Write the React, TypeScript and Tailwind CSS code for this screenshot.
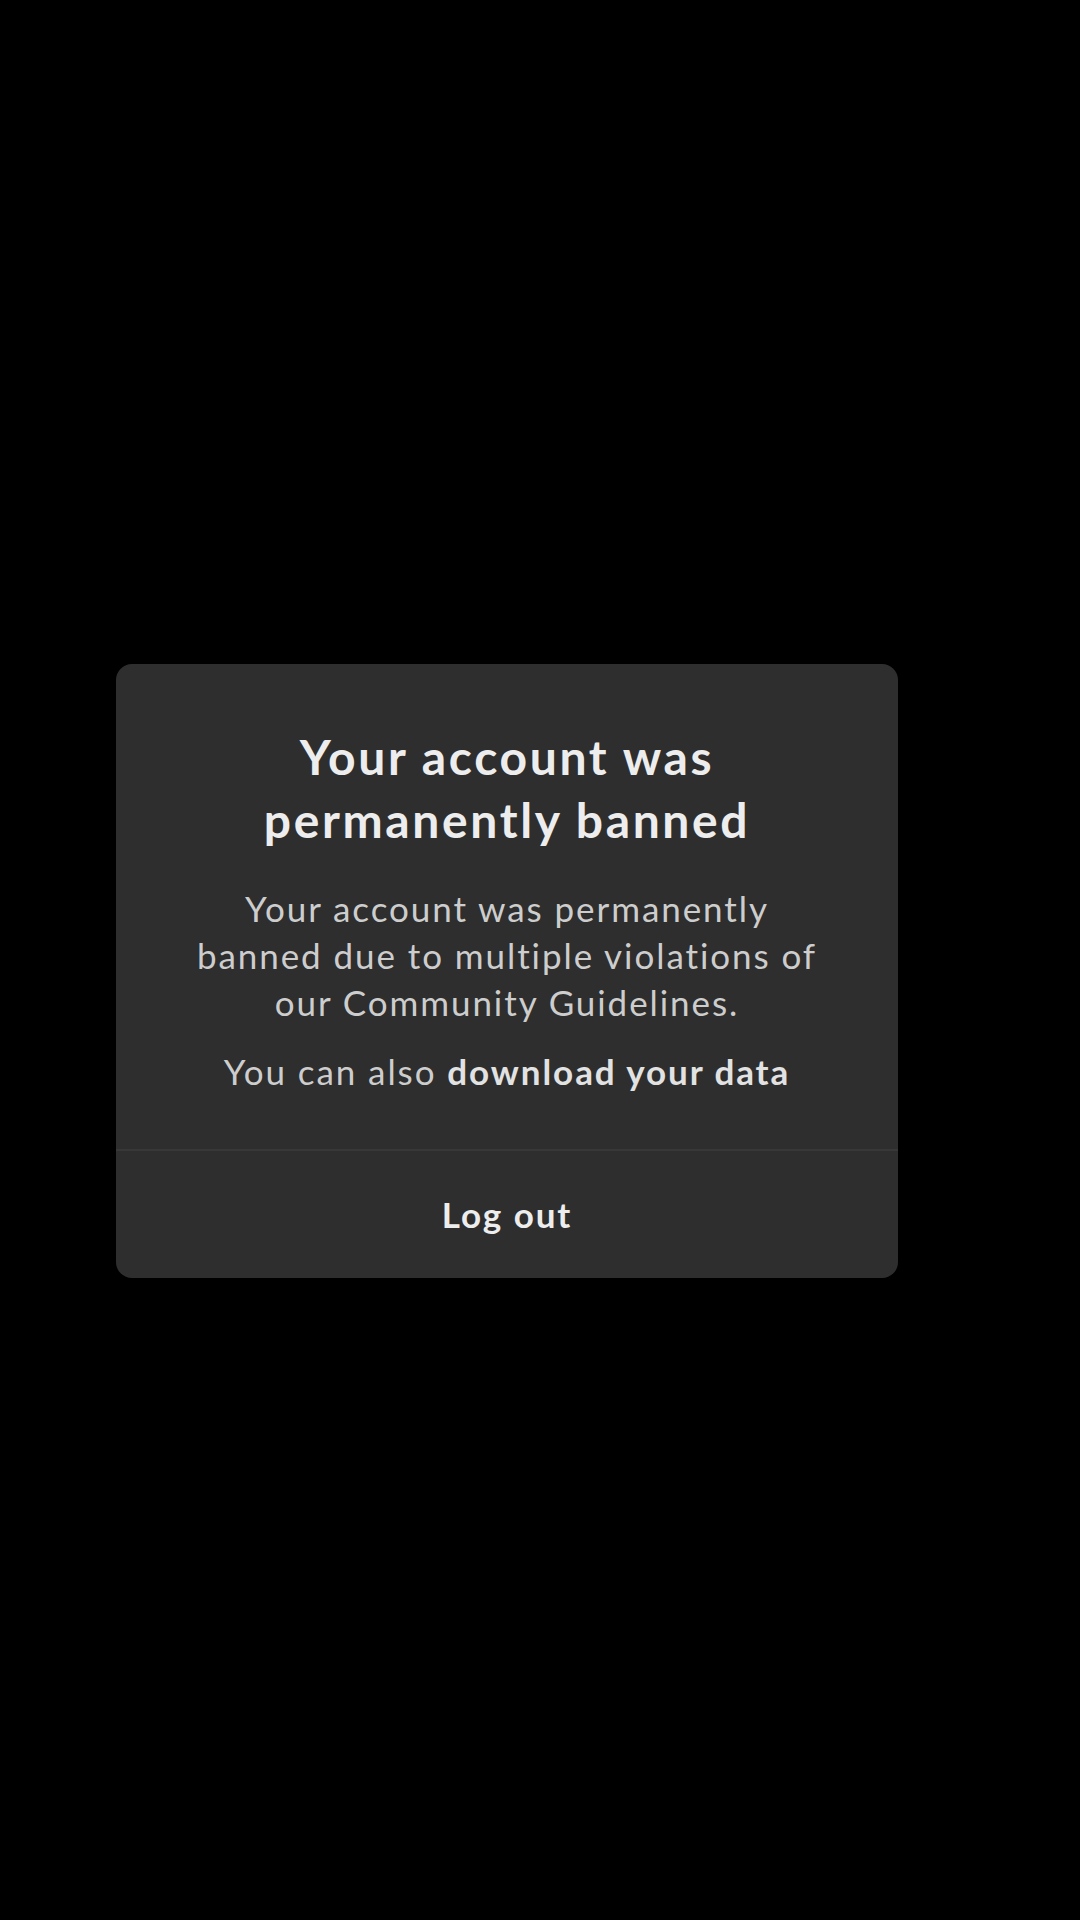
export default function App() {
    return (
        <div className="min-h-[1920px] w-full bg-black pt-[664px] pl-[116px]" style={{fontFamily: '"Lato", "Open Sans", sans-serif'}}>
            <div className="w-[782px] rounded-[16px] bg-[#2e2e2e] overflow-hidden">
                <div className="px-6 pt-[61px] pb-[54px] text-center">
                    <h1 className="text-[48px] leading-[63px] font-bold tracking-[0.055em] text-[#ededed]">
                        Your account was<br/>permanently banned
                    </h1>
                    <p className="mt-[34px] text-[35px] leading-[47px] tracking-[0.055em] text-[#cdcdcd]">
                        Your account was permanently<br/>banned due to multiple violations of<br/>our Community Guidelines.
                    </p>
                    <p className="mt-[22px] text-[35px] leading-[47px] tracking-[0.055em] text-[#cdcdcd]">
                        You can also <span className="font-bold text-[#e2e2e2]">download your data</span>
                    </p>
                </div>
                <div className="h-[2px] bg-[#383838]"/>
                <button className="flex h-[127px] w-full items-center justify-center text-[35px] font-bold tracking-[0.055em] text-[#ededed]">
                    Log out
                </button>
            </div>
        </div>
    )
}
